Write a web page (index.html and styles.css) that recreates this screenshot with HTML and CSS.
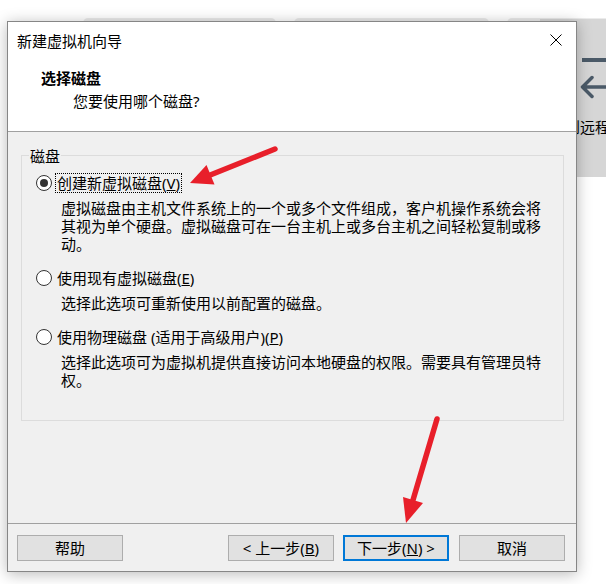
FILE: index.html
```html
<!DOCTYPE html>
<html lang="zh-CN">
<head>
<meta charset="utf-8">
<title>新建虚拟机向导</title>
<link rel="stylesheet" href="styles.css">
</head>
<body>
<div class="tabs">
  <span class="tab tab-a"></span>
  <span class="tab tab-b"></span>
  <span class="tab tab-c"></span>
</div>
<div class="side">
  <div class="dash"></div>
  <svg class="back-arrow" width="26" height="24" viewBox="0 0 26 24"><path d="M12 2.5 L2.5 12 L12 21.5 M2.5 12 H30" fill="none" stroke="#4b5a68" stroke-width="3.5" stroke-linecap="round" stroke-linejoin="round"/></svg>
  <div class="side-text">到远程服务器</div>
</div>

<div class="dialog">
  <div class="header">
    <div class="titlebar">
      <span class="title">新建虚拟机向导</span>
      <svg class="close" width="12" height="12" viewBox="0 0 12 12"><path d="M0.5 0.5 L11.5 11.5 M11.5 0.5 L0.5 11.5" stroke="#000" stroke-width="1"/></svg>
    </div>
    <div class="heading">选择磁盘</div>
    <div class="subtitle">您要使用哪个磁盘?</div>
  </div>
  <div class="body">
    <div class="group">
      <span class="legend">磁盘</span>
      <div class="opt">
        <div class="opt-row"><span class="radio on"></span><span class="label focus">创建新虚拟磁盘(<u>V</u>)</span></div>
        <div class="desc">虚拟磁盘由主机文件系统上的一个或多个文件组成，客户机操作系统会将<br>其视为单个硬盘。虚拟磁盘可在一台主机上或多台主机之间轻松复制或移<br>动。</div>
      </div>
      <div class="opt">
        <div class="opt-row"><span class="radio"></span><span class="label">使用现有虚拟磁盘(<u>E</u>)</span></div>
        <div class="desc">选择此选项可重新使用以前配置的磁盘。</div>
      </div>
      <div class="opt">
        <div class="opt-row"><span class="radio"></span><span class="label">使用物理磁盘 (适用于高级用户)(<u>P</u>)</span></div>
        <div class="desc">选择此选项可为虚拟机提供直接访问本地硬盘的权限。需要具有管理员特<br>权。</div>
      </div>
    </div>
  </div>
  <div class="footer">
    <button class="btn">帮助</button>
    <span class="spacer"></span>
    <button class="btn btn-back">&lt; 上一步(<u>B</u>)</button>
    <button class="btn btn-next">下一步(<u>N</u>) &gt;</button>
    <button class="btn">取消</button>
  </div>
</div>

<svg class="annot" width="606" height="584" viewBox="0 0 606 584">
  <line x1="275" y1="149" x2="209" y2="175.5" stroke="#e81f2a" stroke-width="5.5" stroke-linecap="round"/>
  <polygon points="190,183 206.5,165 214.5,184.5" fill="#e81f2a"/>
  <line x1="437" y1="419" x2="413" y2="500" stroke="#e81f2a" stroke-width="5.5" stroke-linecap="round"/>
  <polygon points="406,523 403,497 423,503" fill="#e81f2a"/>
</svg>
</body>
</html>
```
FILE: styles.css
```css
* { box-sizing: border-box; }

body {
  margin: 0;
  width: 606px;
  height: 584px;
  position: relative;
  overflow: hidden;
  background: #ffffff;
  font-family: "Noto Sans", "Noto Sans CJK SC", sans-serif;
  font-size: 15px;
  color: #000;
}

/* background application */
.tabs {
  position: absolute;
  top: 18px;
  left: 83px;
  display: flex;
  gap: 18px;
}
.tab {
  height: 10px;
  background: #ebebeb;
  border-radius: 5px 5px 0 0;
}
.tab-a { width: 193px; }
.tab-b { width: 195px; }
.tab-c { width: 120px; }

.side {
  position: absolute;
  left: 540px;
  top: 19px;
  width: 66px;
  height: 158px;
  background: #d6d6d6;
  padding: 39px 0 0 42px;
  overflow: hidden;
}
.dash {
  width: 30px;
  height: 4px;
  background: #4b5a68;
}
.back-arrow {
  display: block;
  margin: 13px 0 0 -2px;
}
.side-text {
  margin: 18px 0 0 -17px;
  line-height: 20px;
  white-space: nowrap;
}

/* dialog */
.dialog {
  position: absolute;
  left: 7px;
  top: 21px;
  width: 570px;
  height: 551px;
  border: 1px solid #868686;
  background: #f0f0f0;
  box-shadow: 0 2px 14px rgba(0, 0, 0, 0.28);
  display: flex;
  flex-direction: column;
}

.header {
  height: 110px;
  background: #fff;
  border-bottom: 1px solid #a0a0a0;
}
.titlebar {
  height: 38px;
  display: flex;
  align-items: center;
  justify-content: space-between;
  padding: 0 14px 0 9px;
}
.title { line-height: 38px; }
.close { display: block; margin-top: -2px; }
.heading {
  margin: 8px 0 0 33px;
  font-weight: bold;
  line-height: 20px;
}
.subtitle {
  margin: 3px 0 0 65px;
  line-height: 20px;
}

.body {
  flex: 1;
  padding: 23px 12px 0 13px;
}
.group {
  position: relative;
  height: 266px;
  border: 1px solid #dcdcdc;
  padding: 17px 0 0 14px;
}
.legend {
  position: absolute;
  top: -9px;
  left: 7px;
  padding: 0 1px;
  background: #f0f0f0;
  line-height: 18px;
}

.opt + .opt { margin-top: 15px; }
.opt-row {
  display: flex;
  align-items: center;
  height: 20px;
}
.radio {
  width: 16px;
  height: 16px;
  border: 1px solid #333;
  border-radius: 50%;
  background: #fff;
  display: flex;
  align-items: center;
  justify-content: center;
  flex: none;
}
.radio.on::after {
  content: "";
  width: 8px;
  height: 8px;
  border-radius: 50%;
  background: #333;
}
.label {
  margin-left: 3px;
  padding: 0 1px;
  border: 1px dotted transparent;
  line-height: 18px;
  white-space: nowrap;
}
.label.focus { border-color: #000; }
.desc {
  margin: 6px 0 0 25px;
  line-height: 18px;
  white-space: nowrap;
}

.footer {
  height: 48px;
  border-top: 1px solid #a0a0a0;
  display: flex;
  align-items: flex-start;
  padding: 11px 11px 0 9px;
}
.spacer { flex: 1; }
.btn {
  width: 106px;
  height: 26px;
  padding: 0;
  margin: 0;
  border: 1px solid #adadad;
  background: #e1e1e1;
  font: inherit;
  line-height: 20px;
  color: #000;
  display: flex;
  align-items: center;
  justify-content: center;
  white-space: nowrap;
}
.btn-back { margin-right: 9px; }
.btn-next {
  margin-right: 10px;
  border: 2px solid #0078d7;
}

.annot {
  position: absolute;
  left: 0;
  top: 0;
  pointer-events: none;
}
```
